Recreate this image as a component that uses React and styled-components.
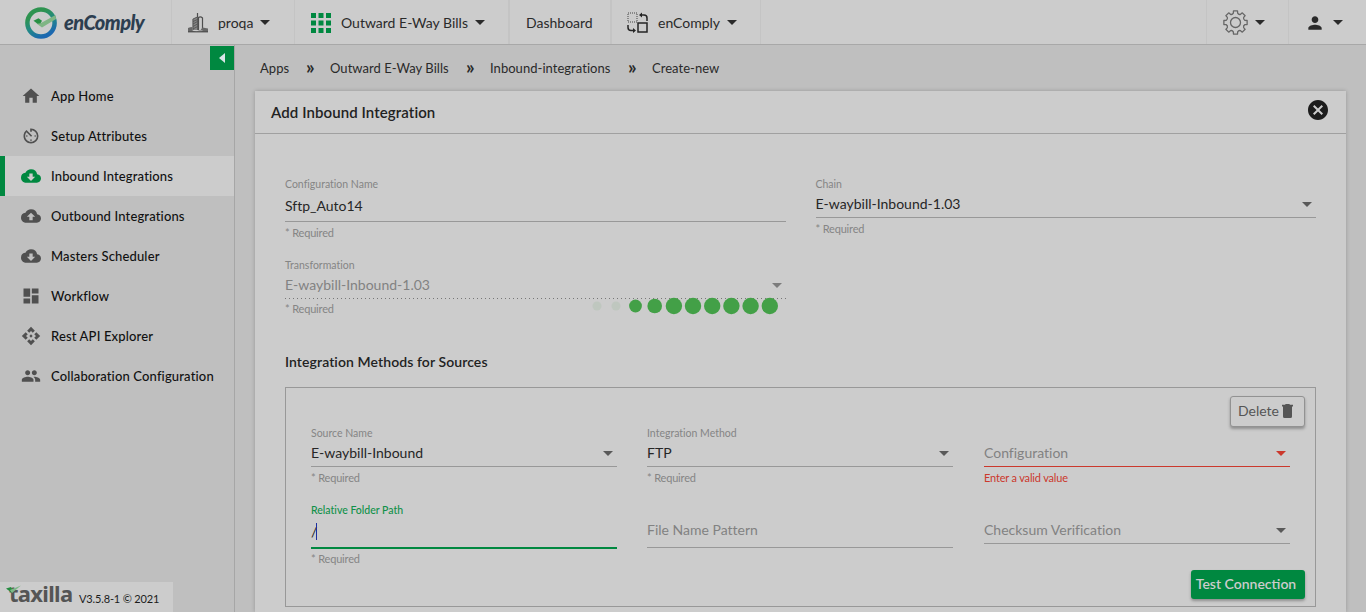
import React from "react";
import styled, { createGlobalStyle, css } from "styled-components";
import {
  MdHome, MdAvTimer, MdCloudDownload, MdCloudUpload, MdDashboard, MdApi,
  MdPeople, MdPerson, MdCancel,
} from "react-icons/md";

const GlobalStyle = createGlobalStyle`
  * { box-sizing: border-box; }
  body {
    margin: 0;
    background: #bfbfbf;
    font-family: Lato, "Liberation Sans", sans-serif;
    font-variant-ligatures: none;
    color: #1c1c1c;
    overflow: hidden;
  }
`;

const Page = styled.div`
  position: relative;
  display: flex;
  flex-direction: column;
  width: 1366px;
  height: 612px;
  overflow: hidden;
  background: #bfbfbf;
`;
const Header = styled.header`
  display: flex;
  height: 45px;
  flex: none;
  background: #ccc;
  border-bottom: 1px solid #a8a8a8;
`;
const Brand = styled.div`
  display: flex;
  align-items: center;
  width: 171px;
  padding: 1px 0 0 25px;
  gap: 6px;
`;
const BrandName = styled.span`
  font-size: 20px;
  font-weight: 900;
  font-style: italic;
  line-height: 24px;
  letter-spacing: -0.55px;
  padding-bottom: 2px;
  color: #2c3e50;
`;
const NavCell = styled.div`
  display: flex;
  align-items: center;
  width: ${(p) => p.$w}px;
  padding: 1px 0 0 ${(p) => p.$pad}px;
  border-left: ${(p) => (p.$thick ? 2 : 1)}px solid #c4c4c4;
  font-size: 14px;
  color: #2a2a2a;
  white-space: nowrap;
`;
const NavLabel = styled.span`
  margin: 0 7px 0 ${(p) => p.$gap || 0}px;
`;
const Spacer = styled.div`
  flex: 1;
  border-left: 1px solid #c4c4c4;
`;
const Body = styled.div`
  display: flex;
  flex: 1;
  min-height: 0;
`;
const Sidebar = styled.aside`
  display: flex;
  flex-direction: column;
  width: 235px;
  flex: none;
  border-right: 1px solid #a6a6a6;
`;
const Collapse = styled.button`
  display: flex;
  align-items: center;
  justify-content: center;
  align-self: flex-end;
  width: 24px;
  height: 24px;
  margin: 1px 0 6px;
  padding: 0;
  border: 0;
  background: #008840;
`;
const MenuItem = styled.a`
  display: flex;
  align-items: center;
  height: 40px;
  padding-left: ${(p) => (p.$active ? 16 : 21)}px;
  gap: 10px;
  font-size: 13px;
  font-weight: 500;
  letter-spacing: 0.15px;
  color: #111;
  white-space: nowrap;
  svg { color: #505050; flex: none; }
  ${(p) => p.$active && css`
    background: #ccc;
    border-left: 5px solid #008840;
    svg { color: #008840; }
  `}
`;
const Footer = styled.div`
  display: flex;
  align-items: flex-end;
  width: 173px;
  height: 30px;
  margin-top: auto;
  padding: 0 0 5px 6px;
  gap: 7px;
  background: #ccc;
  font-size: 11px;
  line-height: 16px;
  letter-spacing: -0.15px;
  white-space: nowrap;
`;
const FooterLogo = styled.span`
  position: relative;
  width: 66px;
  height: 22px;
  padding-left: 3px;
  font: 700 22px/17px "Noto Sans", sans-serif;
  letter-spacing: -0.7px;
  color: #555;
  svg { position: absolute; left: 0; top: 0; }
`;
const Main = styled.main`
  display: flex;
  flex-direction: column;
  flex: 1;
  padding: 0 20px;
`;
const Crumbs = styled.nav`
  display: flex;
  align-items: center;
  height: 46px;
  flex: none;
  padding-left: 5px;
  font-size: 13px;
  letter-spacing: 0.04px;
  color: #2a2a2a;
`;
const Crumb = styled.span`
  width: ${(p) => p.$w}px;
  white-space: nowrap;
`;
const CrumbMark = styled.span`
  width: 24px;
  font-size: 19px;
  line-height: 18px;
  font-weight: 700;
  padding-bottom: 3px;
`;
const Card = styled.section`
  display: flex;
  flex-direction: column;
  flex: 1;
  background: #ccc;
  box-shadow: 0 0 4px rgba(0, 0, 0, 0.22);
`;
const CardHead = styled.div`
  display: flex;
  align-items: center;
  justify-content: space-between;
  height: 43px;
  padding: 0 15.6px 0 16px;
  border-bottom: 1px solid #a0a0a0;
  svg { margin-bottom: 5px; }
`;
const CardTitle = styled.h1`
  margin: 0;
  font-size: 15px;
  font-weight: 600;
  letter-spacing: 0.09px;
  color: #222;
`;
const CardBody = styled.div`
  padding: 43px 30px 0;
`;
const OuterGrid = styled.div`
  display: grid;
  grid-template-columns: 1fr 1fr;
  column-gap: 30px;
  grid-auto-rows: 81px;
  height: 162px;
`;
const InnerGrid = styled.div`
  display: grid;
  grid-template-columns: 336px 337px 306px;
  grid-auto-rows: 77px;
  padding: 0 25px;
  height: 144px;
`;
const FieldBox = styled.div`
  display: flex;
  flex-direction: column;
  min-width: 0;
  ${InnerGrid} & { width: 306px; }
`;
const FieldLabel = styled.label`
  height: 14px;
  font-size: 10.5px;
  line-height: 14px;
  color: ${(p) => (p.$focus ? "#0f9149" : "#858585")};
  font-weight: ${(p) => (p.$focus ? 500 : 400)};
`;
const lineColor = (p) => (p.$focus ? "#008840" : p.$error ? "#cb382c" : "#989898");
const FieldValue = styled.div`
  display: flex;
  align-items: center;
  height: ${(p) => (p.$select ? 27 : p.$focus ? 32 : 31)}px;
  padding: 0 4px ${(p) => (p.$raised ? 5 : 2)}px 0;
  border-style: solid;
  border-color: ${(p) => (p.$dotted ? "transparent" : lineColor(p))};
  border-width: 0 0 ${(p) => (p.$focus ? 2 : 1)}px;
  font-size: 14px;
  color: ${(p) => (p.$muted ? "#828282" : "#262626")};
  white-space: nowrap;
  svg {
    margin: 2px 0 0 auto;
    color: ${(p) => (p.$error ? "#cb382c" : p.$dotted ? "#7c7c7c" : "#595959")};
  }
`;
const DottedLine = styled.div`
  height: 1px;
  margin-top: -1px;
  background: repeating-linear-gradient(90deg, #777 0 1px, #ccc 1px 4px);
`;
const Hint = styled.div`
  font-size: 11px;
  line-height: 22px;
  height: 22px;
  letter-spacing: -0.17px;
  margin-top: ${(p) => (p.$up ? -1 : 0)}px;
  color: ${(p) => (p.$error ? "#cb382c" : "#858585")};
`;
const TextCursor = styled.span`
  width: 1px;
  height: 17px;
  margin: 1px 0 0 -1px;
  background: #1c2fa0;
`;
const SectionTitle = styled.h2`
  margin: 0;
  height: 48px;
  padding-top: 13px;
  font-size: 14px;
  line-height: 20px;
  font-weight: 600;
  letter-spacing: 0.09px;
  color: #222;
`;
const SourcePanel = styled.div`
  height: 220px;
  border: 1px solid #989898;
`;
const PanelActions = styled.div`
  display: flex;
  justify-content: flex-end;
  padding: ${(p) => (p.$bottom ? 0 : "8px")} 10px 0 0;
  height: 38px;
`;
const Button = styled.button`
  display: flex;
  align-items: center;
  justify-content: center;
  flex: none;
  height: ${(p) => (p.$primary ? 29 : 31)}px;
  width: ${(p) => (p.$primary ? 114 : 75)}px;
  padding: 0 4px ${(p) => (p.$primary ? 2 : 3)}px 0;
  gap: 3px;
  border: ${(p) => (p.$primary ? "0" : "1px solid #929292")};
  border-radius: 3px;
  background: ${(p) => (p.$primary ? "#008840" : "#ccc")};
  color: ${(p) => (p.$primary ? "#ccc" : "#555")};
  box-shadow: 0 2px 3px rgba(0, 0, 0, 0.3);
  font-family: Lato, sans-serif;
  font-size: 14px;
  font-weight: ${(p) => (p.$primary ? 600 : 400)};
  white-space: nowrap;
  svg { margin-top: 2px; }
`;
const Loader = styled.svg`
  position: absolute;
  left: 590px;
  top: 296px;
`;

const Caret = () => (
  <svg width="10" height="5" viewBox="0 0 10 5">
    <path d="M0 0h10L5 5z" fill="currentColor" />
  </svg>
);

const BrandMark = () => (
  <svg width="33" height="32" viewBox="0 0 33 32">
    <defs>
      <linearGradient id="ring" x1="0.2" y1="0" x2="0.7" y2="1">
        <stop offset="0.2" stopColor="#2e9350" />
        <stop offset="0.55" stopColor="#238a86" />
        <stop offset="0.95" stopColor="#1c68b0" />
      </linearGradient>
    </defs>
    <circle cx="16" cy="16" r="13.6" fill="none" stroke="url(#ring)" strokeWidth="4.5" />
    <path d="M11.500 16.500l5-.700L30.500 8l.500 4L17 20.500z" fill="#80b584" />
    <path d="M8.500 13.800l5-2.500 3.500 2.500-1.500 2.500-3 .500z" fill="#278f43" />
  </svg>
);

const Building = () => (
  <svg width="20" height="20" viewBox="0 0 20 20" fill="none" stroke="#4e4e4e">
    <path d="M4.500 17V6L9.500 3.500V17z" fill="#858585" stroke="none" />
    <path d="M5 17V6l4.500-2v13M5 8.500l4.500-2M5 11l4.500-2.500M5 13.500l4.500-2.500M5 16l4.500-2.500" strokeWidth="0.800" />
    <path d="M9.500 0v4M10.500 17V4.500q2-1.500 4 .500v12" strokeWidth="1.200" />
    <path d="M0 15q2-1 4.500-1v3.500l4 1.500H0zM14.500 14.500L20 15.500V19h-9z" fill="#686868" stroke="none" />
    <path d="M8 19l3-2h4l-2 2z" fill="#999" stroke="none" />
    <path d="M0 18.800h20" strokeWidth="1.200" />
  </svg>
);

const AppGrid = () => (
  <svg width="20" height="20" viewBox="0 0 20 20" fill="#008840">
    {[0, 7.5, 15].map((y) => [0, 7.5, 15].map((x) => (
      <rect key={`${x}-${y}`} x={x} y={y} width="5" height="5" />
    )))}
  </svg>
);

const Swap = () => (
  <svg width="21" height="21" viewBox="0 0 21 21" fill="none" stroke="#252525">
    <rect x="1" y="1" width="9" height="9" strokeDasharray="1 1" stroke="#444" />
    <rect x="11" y="11" width="9" height="9" strokeWidth="1.500" />
    <path d="M1 13v2.500q0 3 3 3h3M20 9V6q0-3-3-3h-3" strokeWidth="1.500" />
    <path d="M6 16l3 2.500L6 21zM15 .500L12 3l3 2.500z" fill="#252525" stroke="none" />
  </svg>
);

const gearOutline = (() => {
  const step = Math.PI / 4;
  const at = (angle, r) =>
    `${(12.5 + r * Math.sin(angle)).toFixed(2)} ${(12.5 - r * Math.cos(angle)).toFixed(2)}`;
  let d = `M${at(-0.17, 11.8)}`;
  for (let i = 0; i < 8; i += 1) {
    const a = i * step;
    d += `L${at(a + 0.17, 11.8)}L${at(a + 0.23, 9.6)}Q${at(a + step / 2, 8.2)} ${at(a + step - 0.23, 9.6)}L${at(a + step - 0.17, 11.8)}`;
  }
  return `${d}Z`;
})();

const Gear = () => (
  <svg width="25" height="25" viewBox="0 0 25 25" fill="none" stroke="#666" strokeWidth="1.3" strokeLinejoin="round">
    <path d={gearOutline} />
    <circle cx="12.5" cy="12.5" r="5" />
  </svg>
);

const Trash = () => (
  <svg width="11" height="14" viewBox="0 0 11 14" fill="currentColor">
    <path d="M0 .700h3L3.700 0h3.600L8 .700h3v1.800H0zM1 2.500h9v10q0 1.500-1.500 1.500h-6Q1 14 1 12.500z" />
  </svg>
);

const Leaf = () => (
  <svg width="16" height="10" viewBox="0 0 16 10">
    <path d="M0 3.500l5-1.500 2 3-1 3z" fill="#258c40" />
    <path d="M4 5L15 .500 6 8z" fill="#80b889" />
  </svg>
);

function Field({ label, value, placeholder, hint, select, error, disabled, focus }) {
  return (
    <FieldBox>
      <FieldLabel $focus={focus}>{label}</FieldLabel>
      <FieldValue
        $select={select}
        $focus={focus}
        $error={error}
        $dotted={disabled}
        $raised={!!placeholder && !select}
        $muted={disabled || !!placeholder}
      >
        {value || placeholder}
        {focus && <TextCursor />}
        {select && <Caret />}
      </FieldValue>
      {disabled && <DottedLine />}
      {hint && <Hint $error={error} $up={disabled || focus}>{hint}</Hint>}
    </FieldBox>
  );
}

const menu = [
  { icon: MdHome, text: "App Home" },
  { icon: MdAvTimer, text: "Setup Attributes" },
  { icon: MdCloudDownload, text: "Inbound Integrations", active: true },
  { icon: MdCloudUpload, text: "Outbound Integrations" },
  { icon: MdCloudDownload, text: "Masters Scheduler" },
  { icon: MdDashboard, text: "Workflow" },
  { icon: MdApi, text: "Rest API Explorer" },
  { icon: MdPeople, text: "Collaboration Configuration" },
];

const dots = [
  [7, 4.5, 0.09], [26, 4.5, 0.09], [45.5, 6.4, 1], [64.7, 7.3, 1], [83.9, 8.2, 1],
  [103, 8.2, 1], [122.2, 8.2, 1], [141.4, 8.2, 1], [160.6, 8.2, 1], [179.8, 8.2, 1],
];

export default function App() {
  return (
    <Page>
      <GlobalStyle />
      <Header>
        <Brand><BrandMark /><BrandName>enComply</BrandName></Brand>
        <NavCell $w={123} $pad={16}><Building /><NavLabel $gap={10}>proqa</NavLabel><Caret /></NavCell>
        <NavCell $w={214} $pad={16}><AppGrid /><NavLabel $gap={10}>Outward E-Way Bills</NavLabel><Caret /></NavCell>
        <NavCell $w={102} $pad={16} $thick>Dashboard</NavCell>
        <NavCell $w={150} $pad={15} $thick><Swap /><NavLabel $gap={10}>enComply</NavLabel><Caret /></NavCell>
        <Spacer />
        <NavCell $w={82} $pad={16}><Gear /><NavLabel /><Caret /></NavCell>
        <NavCell $w={78} $pad={16}><MdPerson size={20} /><NavLabel $gap={1} /><Caret /></NavCell>
      </Header>
      <Body>
        <Sidebar>
          <Collapse aria-label="Collapse menu">
            <svg width="6" height="10" viewBox="0 0 6 10"><path d="M6 0v10L0 5z" fill="#d8e6e8" /></svg>
          </Collapse>
          {menu.map(({ icon: Icon, text, active }) => (
            <MenuItem key={text} $active={active}><Icon size={20} />{text}</MenuItem>
          ))}
          <Footer>
            <FooterLogo>taxilla<Leaf /></FooterLogo>
            <span>V3.5.8-1 © 2021</span>
          </Footer>
        </Sidebar>
        <Main>
          <Crumbs>
            <Crumb $w={46}>Apps</Crumb><CrumbMark>»</CrumbMark>
            <Crumb $w={136}>Outward E-Way Bills</Crumb><CrumbMark>»</CrumbMark>
            <Crumb $w={138}>Inbound-integrations</Crumb><CrumbMark>»</CrumbMark>
            <Crumb $w={80}>Create-new</Crumb>
          </Crumbs>
          <Card>
            <CardHead>
              <CardTitle>Add Inbound Integration</CardTitle>
              <MdCancel size={24} />
            </CardHead>
            <CardBody>
              <OuterGrid>
                <Field label="Configuration Name" value="Sftp_Auto14" hint="* Required" />
                <Field select label="Chain" value="E-waybill-Inbound-1.03" hint="* Required" />
                <Field select disabled label="Transformation" value="E-waybill-Inbound-1.03" hint="* Required" />
              </OuterGrid>
              <SectionTitle>Integration Methods for Sources</SectionTitle>
              <SourcePanel>
                <PanelActions><Button>Delete<Trash /></Button></PanelActions>
                <InnerGrid>
                  <Field select label="Source Name" value="E-waybill-Inbound" hint="* Required" />
                  <Field select label="Integration Method" value="FTP" hint="* Required" />
                  <Field select error placeholder="Configuration" hint="Enter a valid value" />
                  <Field focus label="Relative Folder Path" value="/" hint="* Required" />
                  <Field placeholder="File Name Pattern" />
                  <Field select placeholder="Checksum Verification" />
                </InnerGrid>
                <PanelActions $bottom><Button $primary>Test Connection</Button></PanelActions>
              </SourcePanel>
            </CardBody>
          </Card>
        </Main>
      </Body>
      <Loader width="190" height="20">
        {dots.map(([x, r, o]) => <circle key={x} cx={x} cy="10" r={r} fill="#43a047" opacity={o} />)}
      </Loader>
    </Page>
  );
}
